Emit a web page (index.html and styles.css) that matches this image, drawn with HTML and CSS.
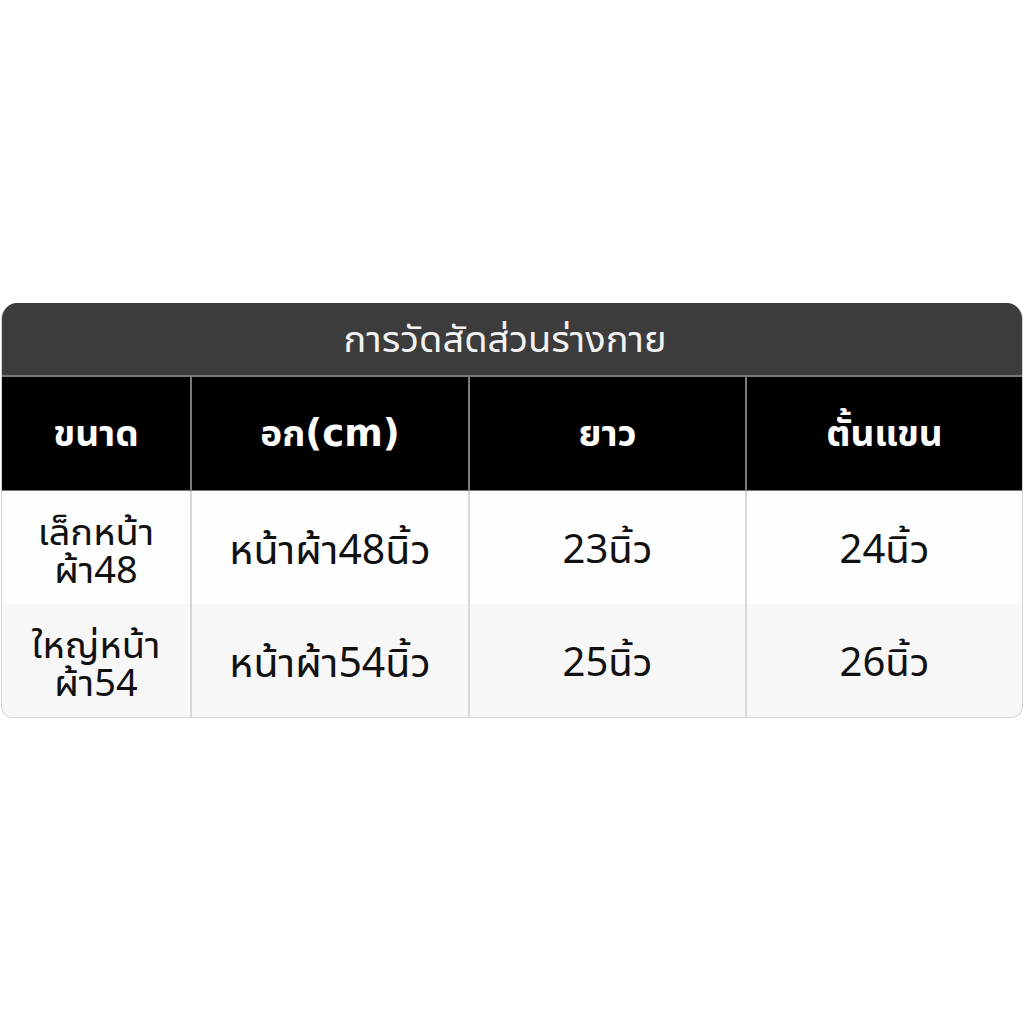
FILE: index.html
```html
<!DOCTYPE html>
<html lang="th">
<head>
<meta charset="utf-8">
<link rel="stylesheet" href="styles.css">
</head>
<body>
<div class="card">
  <div class="title">การวัดสัดส่วนร่างกาย</div>
  <div class="grid">
    <div class="cell head">ขนาด</div>
    <div class="cell head">อก(cm)</div>
    <div class="cell head">ยาว</div>
    <div class="cell head">ตั้นแขน</div>
    <div class="cell first">เล็กหน้า<br>ผ้า48</div>
    <div class="cell wide">หน้าผ้า48นิ้ว</div>
    <div class="cell">23นิ้ว</div>
    <div class="cell">24นิ้ว</div>
    <div class="cell first alt">ใหญ่หน้า<br>ผ้า54</div>
    <div class="cell wide alt">หน้าผ้า54นิ้ว</div>
    <div class="cell alt">25นิ้ว</div>
    <div class="cell alt">26นิ้ว</div>
  </div>
</div>
</body>
</html>
```
FILE: styles.css
```css
html, body {
  margin: 0;
  padding: 0;
  background: #ffffff;
}
body {
  font-family: "Noto Sans", "Noto Sans Thai UI", "Noto Sans Thai", sans-serif;
  padding-top: 303px;
}
.card {
  margin: 0 1px;
  border-radius: 16px 16px 12px 12px;
  overflow: hidden;
  background: #d6d6d6;
  border: 1px solid #d6d6d6;
  border-top: none;
}
.title {
  height: 74px;
  box-sizing: border-box;
  background: #3c3c3c;
  color: #f2f2f2;
  font-size: 38px;
  display: flex;
  align-items: center;
  justify-content: center;
  padding-right: 14px;
  padding-bottom: 4px;
  border-bottom: 2px solid #7a7a7a;
}
.grid {
  display: grid;
  grid-template-columns: 188px 276px 275px 1fr;
  column-gap: 2px;
  row-gap: 0;
  background: #d8d8d8;
}
.cell {
  height: 113px;
  display: flex;
  align-items: center;
  justify-content: center;
  text-align: center;
  background: #fefefe;
  color: #111;
  font-size: 40px;
  line-height: 38px;
}
.cell.first {
  font-size: 38px;
  padding-top: 2px;
  box-sizing: border-box;
}
.cell.wide {
  font-size: 41px;
}
.cell.head {
  background: #000;
  color: #fff;
  font-family: "DejaVu Sans", "Noto Sans Thai UI", "Noto Sans Thai", sans-serif;
  font-weight: bold;
  font-size: 37px;
  border-bottom: 1px solid #7a7a7a;
}
.grid .head:nth-child(-n+3) {
  box-shadow: 2px 0 0 #7a7a7a;
}
.cell.alt {
  background: #f7f7f7;
}
```
